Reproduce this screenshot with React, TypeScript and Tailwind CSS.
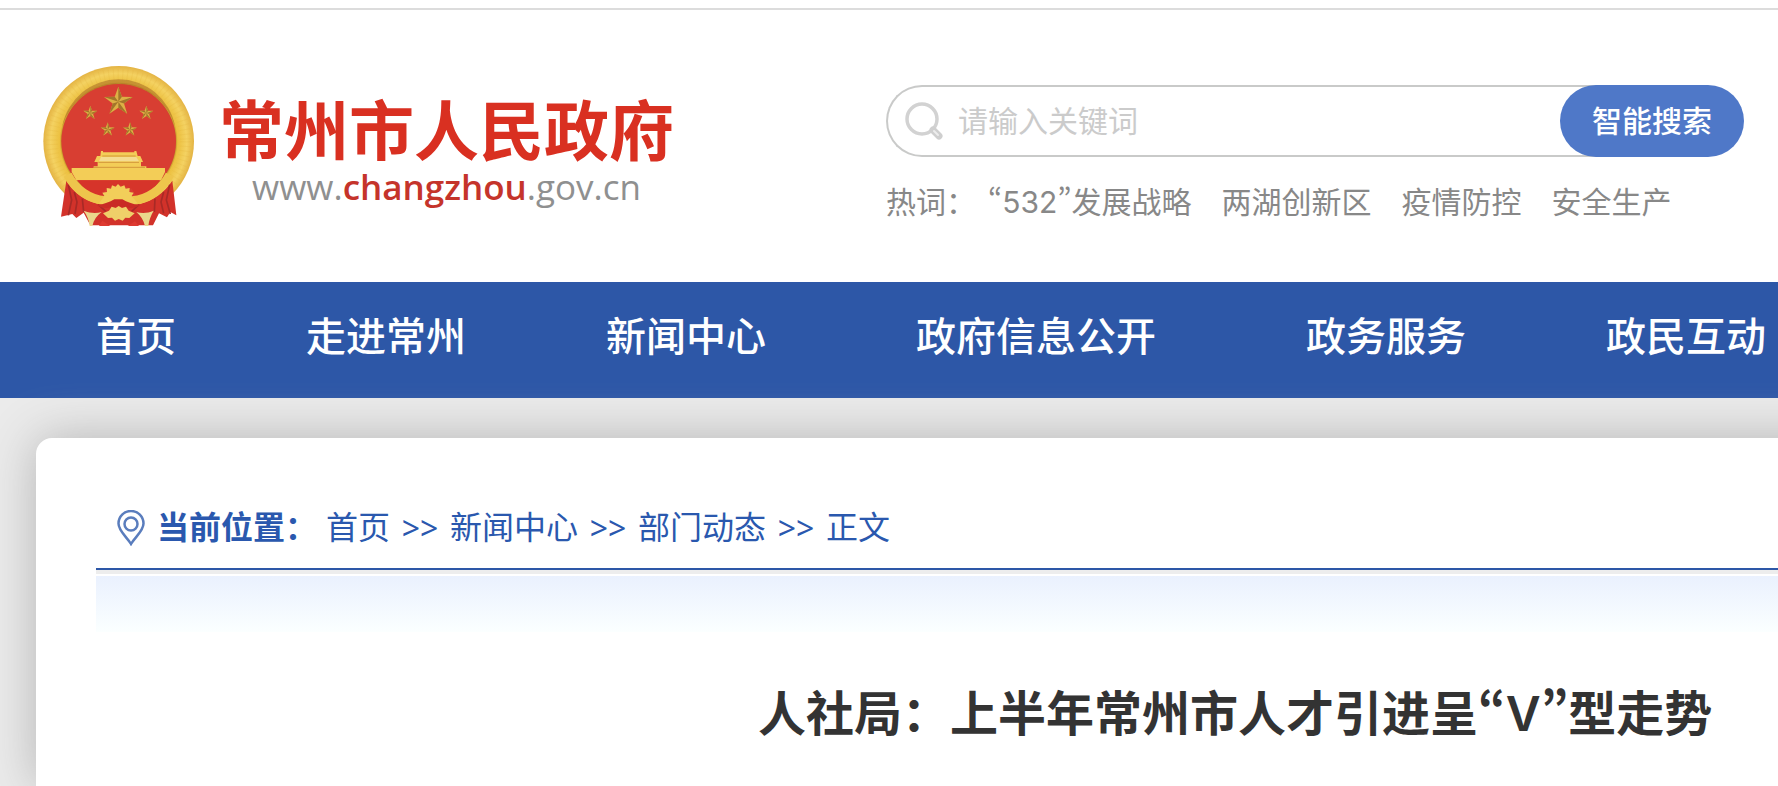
import { Fragment } from 'react';

const hotWords = [
  { quoted: '532', text: '发展战略' },
  { text: '两湖创新区' },
  { text: '疫情防控' },
  { text: '安全生产' },
];

const navItems = [
  { label: '首页', width: 'w-[200px]' },
  { label: '走进常州', width: 'w-[300px]' },
  { label: '新闻中心', width: 'w-[300px]' },
  { label: '政府信息公开', width: 'w-[400px]' },
  { label: '政务服务', width: 'w-[300px]' },
  { label: '政民互动', width: 'w-[300px]' },
];

const crumbs = ['首页', '新闻中心', '部门动态', '正文'];

const STAR = '0,-10 2.4,-3.2 9.5,-3.1 3.8,1.2 5.9,8.1 0,4 -5.9,8.1 -3.8,1.2 -9.5,-3.1 -2.4,-3.2';

const stars = [
  { x: 264, y: 155, size: 4.5 },
  { x: 180, y: 189, size: 2.2 },
  { x: 348, y: 189, size: 2.2 },
  { x: 232, y: 239, size: 2.2 },
  { x: 299, y: 239, size: 2.2 },
];

function Emblem() {
  return (
    <svg viewBox="38 48 456 480" className="h-[160px] w-[152px] shrink-0" aria-hidden="true">
      <defs>
        <radialGradient id="ring" gradientUnits="userSpaceOnUse" cx="265" cy="274" r="227">
          <stop offset="0.75" stopColor="#b98a26" />
          <stop offset="0.78" stopColor="#ecc03f" />
          <stop offset="0.9" stopColor="#f4d262" />
          <stop offset="1" stopColor="#e3b242" />
        </radialGradient>
      </defs>
      <circle cx="265" cy="274" r="226" fill="url(#ring)" />
      <circle
        cx="265"
        cy="274"
        r="200"
        fill="none"
        stroke="#dba62f"
        strokeWidth="34"
        strokeDasharray="3 11"
        opacity="0.15"
      />
      <circle cx="265" cy="274" r="172" fill="#d83e32" />
      <path d="M96 228a172 172 0 0 1 338 0a176 176 0 0 0-338 0z" fill="#8c4a1c" opacity="0.4" />
      {stars.map((star) => (
        <g key={`${star.x}-${star.y}`} transform={`translate(${star.x} ${star.y}) scale(${star.size})`}>
          <polygon points={STAR} fill="#dcb045" />
          <path
            d="M0 0L0-10L2.4-3.2zM0 0L9.5-3.1L3.8 1.2zM0 0L5.9 8.1L0 4zM0 0L-5.9 8.1L-3.8 1.2zM0 0L-9.5-3.1L-2.4-3.2z"
            fill="#a3752a"
          />
        </g>
      ))}
      <path
        d="M212 303h6v4h94v-4h6l4 15h8l8 18h-6v13h16v5h56v12l-12 25H138l-14-25v-12h66v-5h12v-13h-10l8-18h10z"
        fill="#f3cd57"
      />
      <path d="M216 318h100M204 337h122M190 352h154" stroke="#d4973b" strokeWidth="3" />
      <path d="M212 321h106l8 13H206z" fill="#f4dc91" />
      <path d="M142 391h246c-14 26-38 44-66 55l-18-30-39-12-38 12-18 30c-28-12-52-30-67-55z" fill="#d6342a" />
      {/* drapes hanging from the ring */}
      <path
        d="M108 392c22 36 56 60 96 70l36-2 26-14 28 14 36 2c38-10 74-36 96-70l12 104-18-10-10 16-24-12-18 36H180l-20-38-22 16-12-12-34 8z"
        fill="#d2322a"
      />
      <path
        d="M114 404l10 46-10 46M132 426l8 30-6 36M418 404l-10 46 12 42M400 426l-8 30 8 34M204 464l22 20M326 464l-22 20M156 446l4 40M374 446l-2 40"
        stroke="#a82a26"
        strokeWidth="5"
        fill="none"
      />
      <path d="M112 374c24 46 66 74 112 78M418 374c-24 46-66 74-112 78" fill="none" stroke="#eec54c" strokeWidth="26" />
      {/* cog wheel and the knot under it */}
      <path
        d="M206 460l16-22-6-10 14-2-1-12 13 2 3-10 11 4 7-8 8 8 11-4 4 10 12-2-1 12 13 2-6 10 18 22-38 6-30-16-28 16z"
        fill="#f2ce5a"
      />
      <path d="M200 466c22-4 38-10 52-18h24c14 8 30 14 52 18-20 14-42 6-64 2-22 4-44 12-64-2z" fill="#c92b25" />
      <path d="M218 490l18-8 8-12 12 4 9-6 10 6 12-4 8 12 18 8-16 14-12-1-8 9-12-5-11 5-9-9-12 1z" fill="#efd069" />
      <path
        d="M160 482c20 8 38 8 54 4-14 10-24 24-28 42h-8c-2-18-8-32-18-46zM370 482c-18 8-36 8-52 4 12 10 22 24 26 42h10c2-18 8-32 16-46z"
        fill="#ead78b"
      />
      <path d="M206 528l10-16 24 16zM326 528l-12-14-22 14z" fill="#de3a31" />
    </svg>
  );
}

function SearchIcon() {
  return (
    <svg viewBox="0 0 38 38" className="ml-[17px] size-[38px] shrink-0" fill="none" aria-hidden="true">
      <circle cx="17" cy="17" r="15" stroke="#d2d2d2" strokeWidth="3.5" />
      <path d="M28 28l6 6" stroke="#cfcfcf" strokeWidth="7" strokeLinecap="round" />
      <path d="M29 29l4 4" stroke="#ececec" strokeWidth="2" strokeLinecap="round" />
    </svg>
  );
}

function PinIcon() {
  return (
    <svg viewBox="0 0 28 36" className="h-9 w-7 shrink-0" fill="none" stroke="#5a7dbd" aria-hidden="true">
      <path d="M14 34C10 27 1.500 21 1.500 13.500a12.500 12.500 0 0 1 25 0C26.500 21 18 27 14 34z" strokeWidth="2.500" />
      <circle cx="14" cy="14" r="6.500" strokeWidth="2.500" />
    </svg>
  );
}

// the Korean face has proportional curly quotes, the Chinese one sets them full width
function Quoted({ children }: { children: string }) {
  return (
    <span lang="ko" className="font-['Noto_Sans_CJK_KR',sans-serif] leading-none">
      “<span className="font-['Inter',sans-serif]">{children}</span>”
    </span>
  );
}

function Header() {
  return (
    <header className="flex border-t-2 border-[#dcdcdc] pb-14 pl-[43px] pr-[34px]">
      <a href="#" className="mt-14 flex w-[843px] shrink-0 items-start">
        <Emblem />
        <span className="ml-6 flex flex-col items-center whitespace-nowrap">
          <span className="mt-8 text-[65px] font-bold leading-[68px] text-[#d93021]">常州市人民政府</span>
          <span className="font-['Open_Sans',sans-serif] text-[35px] leading-[42px] text-[#8f9090]">
            www.<span className="font-semibold text-[#c5342b]">changzhou</span>.gov.cn
          </span>
        </span>
      </a>
      <div className="mt-[75px] min-w-0 flex-1">
        <form className="flex h-[72px]" onSubmit={(e) => e.preventDefault()}>
          <div className="-mr-9 flex min-w-0 flex-1 items-center rounded-l-full border-2 border-r-0 border-[#c9cac9] bg-white">
            <SearchIcon />
            <input
              type="text"
              aria-label="请输入关键词"
              placeholder="请输入关键词"
              className="ml-[15px] min-w-0 flex-1 text-[30px] outline-none placeholder:text-[#cbcbcb]"
            />
          </div>
          <button type="submit" className="relative w-[184px] rounded-full bg-[#4f78c8] text-[30px] font-medium text-white">
            智能搜索
          </button>
        </form>
        <div className="mt-[23px] flex items-baseline whitespace-nowrap text-[30px] leading-[44px] text-[#888]">
          <span className="mr-3">热词：</span>
          <div className="flex items-baseline gap-[30px]">
            {hotWords.map((word) => (
              <a key={word.text} href="#">
                {word.quoted && <Quoted>{word.quoted}</Quoted>}
                {word.text}
              </a>
            ))}
          </div>
        </div>
      </div>
    </header>
  );
}

export default function App() {
  return (
    <div
      lang="zh-CN"
      className="min-h-screen overflow-hidden bg-white pt-2 font-['Inter','Noto_Sans_CJK_SC',sans-serif]"
    >
      <Header />
      <nav className="flex h-[116px] bg-[#2d57a7] pl-9">
        {navItems.map((item) => (
          <a
            key={item.label}
            href="#"
            className={`shrink-0 pt-[25px] text-center text-[40px] font-medium leading-[60px] text-white ${item.width}`}
          >
            {item.label}
          </a>
        ))}
      </nav>
      <div className="bg-[#ebebeb] pl-9 pt-10">
        <main className="-mr-16 min-h-[348px] rounded-tl-2xl bg-white pl-[60px] pt-[60px] shadow-[0_0_50px_#b4b4b4]">
          <div className="flex h-[72px] items-start whitespace-nowrap border-b-2 border-[#2d57a7] pl-[21px] text-[32px] leading-[60px] text-[#2a58ae]">
            <div className="flex items-center">
              <PinIcon />
              <strong className="ml-3">当前位置：</strong>
            </div>
            <div className="ml-[9px] flex gap-[10px]">
              {crumbs.map((crumb, i) => (
                <Fragment key={crumb}>
                  {i > 0 && <span className="w-10 text-center font-['Noto_Sans',sans-serif]">&gt;&gt;</span>}
                  <a href="#">{crumb}</a>
                </Fragment>
              ))}
            </div>
          </div>
          <div className="h-1 bg-[#ededed]" />
          <div className="mt-0.5 h-14 bg-linear-to-b from-[#eaf1fe] to-[#fbffff]" />
          <h1 className="mt-[46px] whitespace-nowrap pl-[662px] text-[48px] font-semibold leading-[72px] text-[#333]">
            人社局：上半年常州市人才引进呈<Quoted>V</Quoted>型走势
          </h1>
        </main>
      </div>
    </div>
  );
}
